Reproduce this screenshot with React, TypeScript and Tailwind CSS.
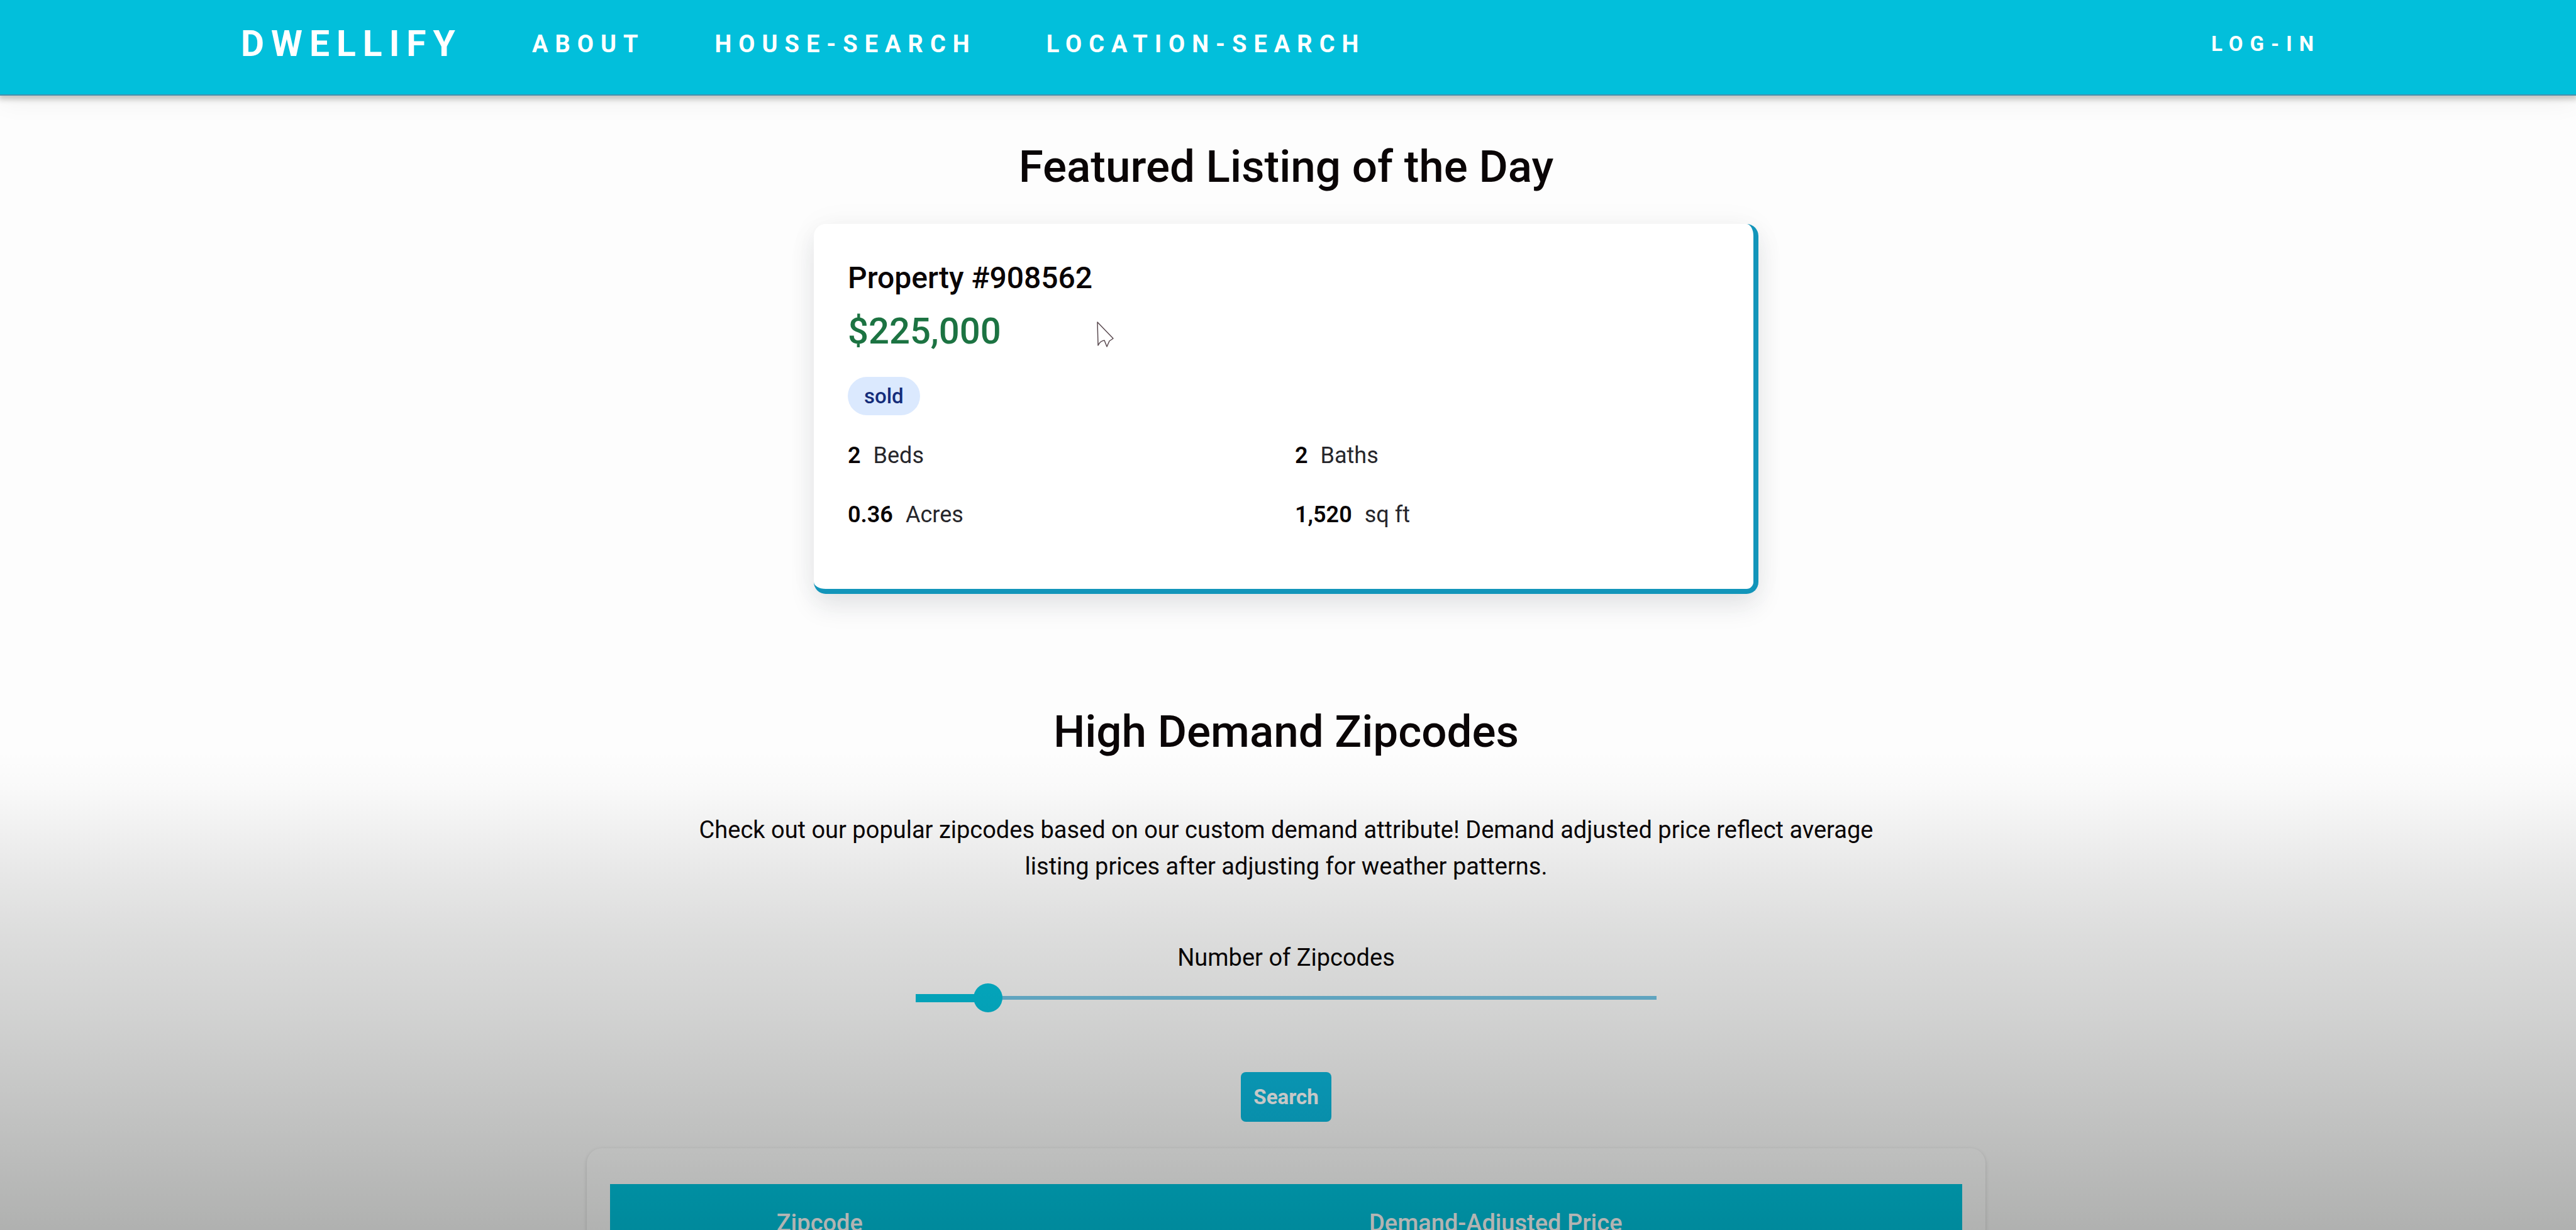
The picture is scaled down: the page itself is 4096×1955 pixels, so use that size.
const navLinks = ['ABOUT', 'HOUSE-SEARCH', 'LOCATION-SEARCH'];

const facts = [
  { value: '2', label: 'Beds' },
  { value: '2', label: 'Baths' },
  { value: '0.36', label: 'Acres' },
  { value: '1,520', label: 'sq ft' },
];

function Header() {
  return (
    <header className="relative flex h-[152px] items-center justify-between border-b-2 border-[#4691ad] bg-[#02bfdb] pr-[406px] pb-[10px] pl-[383px] font-bold text-white shadow-[0_4px_8px_2px_rgba(40,40,30,0.24),0_8px_40px_rgba(0,0,0,0.06)]">
      <nav className="flex items-center gap-[111px] text-[38px] tracking-[11px]">
        <a href="#home" className="text-[57px]">DWELLIFY</a>
        {navLinks.map((name) => (
          <a key={name} href={'#' + name.toLowerCase()}>{name}</a>
        ))}
      </nav>
      <a href="#login" className="text-[33px] tracking-[11px]">LOG-IN</a>
    </header>
  );
}

function Listing() {
  return (
    <article className="mt-[49px] w-[1502px] max-w-full rounded-[19px] border-r-8 border-b-8 border-[#1295ba] bg-white pt-[58px] pr-[56px] pb-[89px] pl-[54px] shadow-[0_20px_40px_rgba(30,40,60,0.1),0_0_50px_rgba(30,60,60,0.04)]">
      <h3 className="text-[48px] leading-[56px] font-medium">Property #908562</h3>
      <p className="relative mt-[18px] text-[58px] leading-[76px] font-medium text-[#1c7342]">
        $225,000
        <svg className="absolute top-[22px] left-[395px] h-[44px] w-[30px]" viewBox="0 0 30 44" fill="white" stroke="#5a4a50" strokeWidth="1.5" strokeLinejoin="round">
          <path d="M2 2 L3 39 Q6 32 13 31 L17 41 L21 32 L27 28 Z" />
        </svg>
      </p>
      <span className="mt-[35px] block w-fit rounded-full bg-[#dbe9fe] px-[26px] py-[7px] text-[33px] leading-[47px] font-medium text-[#142c7a]">sold</span>
      <ul className="mt-[36px] grid grid-cols-2 gap-x-[38px] gap-y-[37px] text-[36px] leading-[57px]">
        {facts.map(({ value, label }) => (
          <li key={label} className="flex gap-[20px]">
            <span className="font-semibold">{value}</span>
            <span className="text-[#26262b]">{label}</span>
          </li>
        ))}
      </ul>
    </article>
  );
}

function DemandSearch() {
  return (
    <form className="flex w-full flex-col items-center" onSubmit={(e) => e.preventDefault()}>
      <label htmlFor="zip-count" className="mt-[88px] text-[38px] leading-[57px]">Number of Zipcodes</label>
      <input
        id="zip-count"
        type="range"
        min={1}
        max={50}
        defaultValue={5}
        className="mt-[12px] h-[46px] w-[1178px] max-w-full appearance-none [background-image:linear-gradient(#04c1dc,#04c1dc),linear-gradient(#72c3e4,#72c3e4)] [background-size:10%_13px,100%_6px] [background-position:left_center,left_center] bg-no-repeat [&::-webkit-slider-thumb]:h-[46px] [&::-webkit-slider-thumb]:w-[46px] [&::-webkit-slider-thumb]:appearance-none [&::-webkit-slider-thumb]:rounded-full [&::-webkit-slider-thumb]:bg-[#04c1dc]"
      />
      <button type="submit" className="mt-[95px] rounded-[8px] bg-[#0bbae0] px-[20px] py-[15px] text-[33px] leading-[49px] font-bold text-white">Search</button>
    </form>
  );
}

function ZipTable() {
  return (
    <div className="mt-[42px] w-[2224px] max-w-full rounded-[24px] bg-white px-[37px] pt-[57px] pb-[58px] shadow-[0_2px_6px_rgba(0,0,0,0.16)]">
      <table className="w-full table-fixed text-[38px] leading-[56px] text-white">
        <thead className="bg-[#00c4e0]">
          <tr>
            <th className="w-[31%] py-[34px] font-medium">Zipcode</th>
            <th className="py-[34px] font-medium">Demand-Adjusted Price</th>
          </tr>
        </thead>
      </table>
    </div>
  );
}

export default function App() {
  return (
    <div className="relative h-screen overflow-hidden bg-[#fdfdfd] font-[Roboto,sans-serif] text-[#0a0506]">
      <Header />
      <main className="flex flex-col items-center pt-[71px] pr-[6px]">
        <h2 className="text-[71px] leading-[84px] font-medium">Featured Listing of the Day</h2>
        <Listing />
        <h2 className="mt-[177px] text-[71px] leading-[84px] font-medium">High Demand Zipcodes</h2>
        <p className="mt-[85px] w-[1950px] max-w-full text-center text-[38px] leading-[58px]">
          Check out our popular zipcodes based on our custom demand attribute! Demand adjusted price reflect average listing prices after adjusting for weather patterns.
        </p>
        <DemandSearch />
        <ZipTable />
      </main>
      <div className="pointer-events-none absolute inset-0 bg-[linear-gradient(to_bottom,rgba(0,4,0,0)_61%,rgba(0,4,0,0.015)_64%,rgba(0,4,0,0.085)_71%,rgba(0,4,0,0.13)_76%,rgba(0,4,0,0.168)_82%,rgba(0,4,0,0.25)_93%,rgba(0,4,0,0.307)_100%)]" />
    </div>
  );
}
